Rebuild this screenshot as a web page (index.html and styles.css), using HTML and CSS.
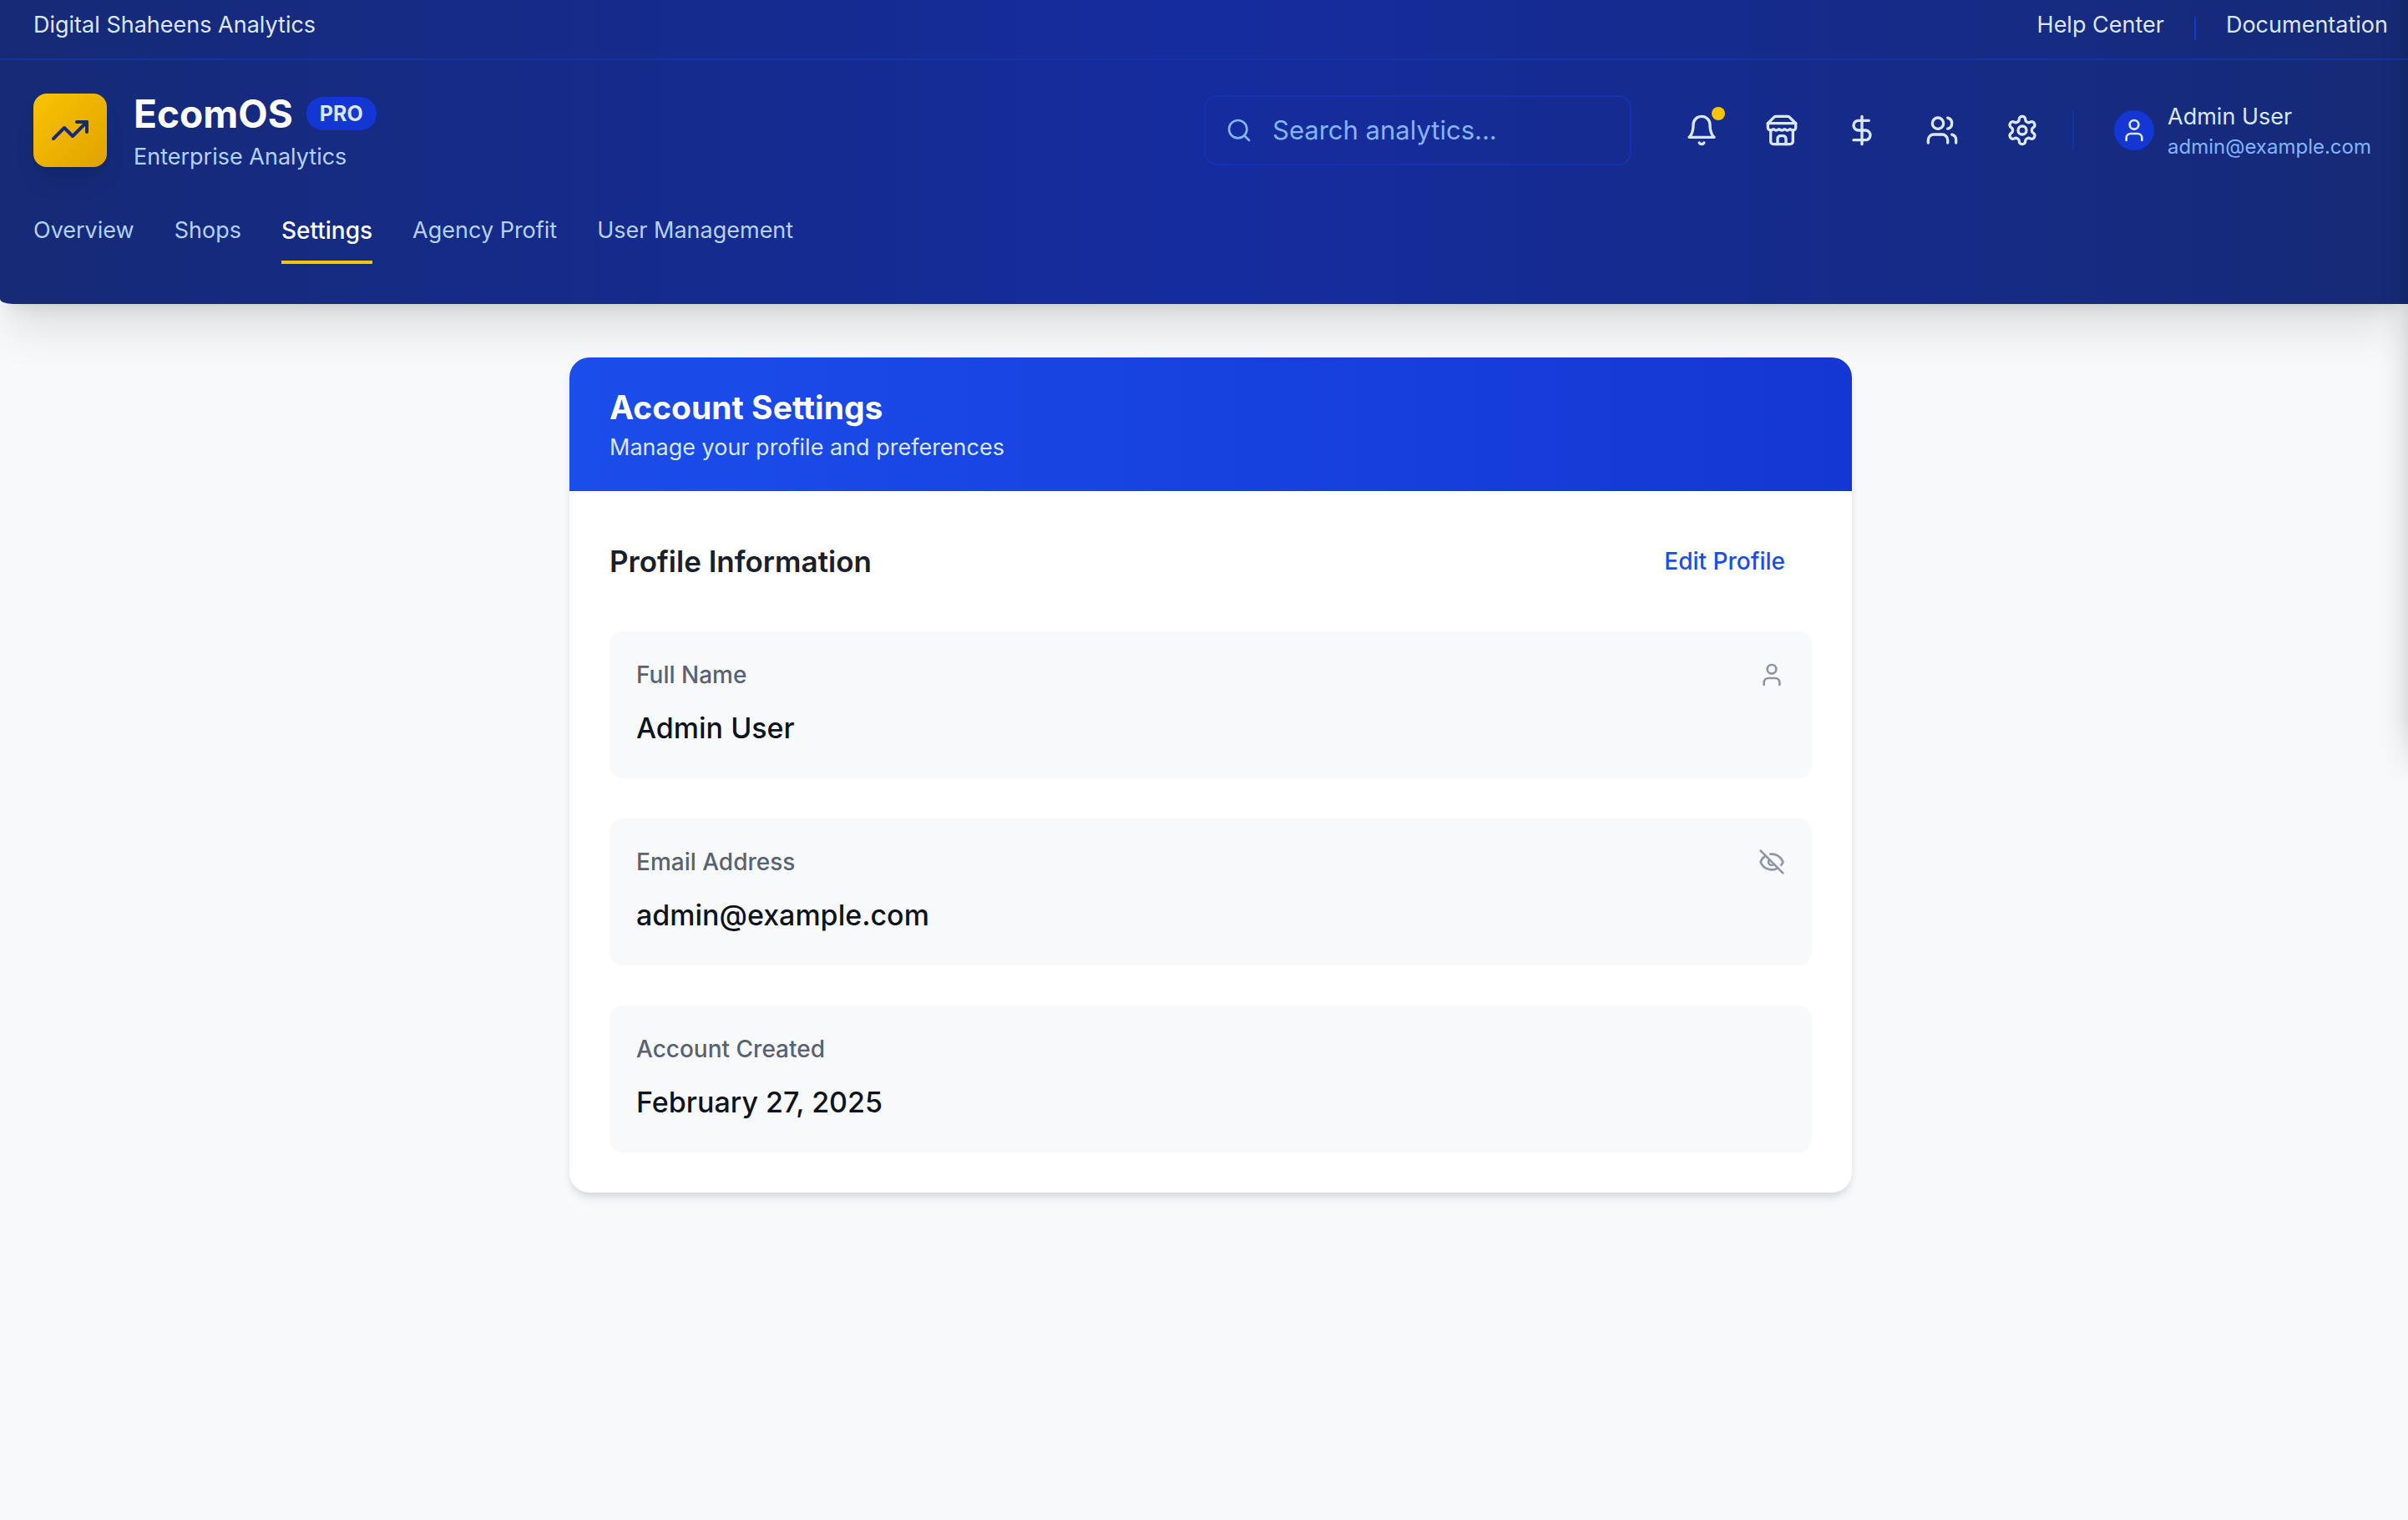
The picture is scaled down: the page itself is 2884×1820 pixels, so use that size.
FILE: index.html
```html
<!DOCTYPE html>
<html lang="en">
<head>
<meta charset="utf-8">
<meta name="viewport" content="width=device-width, initial-scale=1">
<title>EcomOS – Account Settings</title>
<link rel="stylesheet" href="styles.css">
</head>
<body>
<header class="header">
  <div class="topbar">
    <span>Digital Shaheens Analytics</span>
    <div class="topbar-links">
      <a href="#help">Help Center</a>
      <span class="topbar-divider"></span>
      <a href="#docs">Documentation</a>
    </div>
  </div>
  <div class="masthead">
    <div class="brand">
      <div class="brand-logo">
        <svg class="icon icon-lg" viewBox="0 0 24 24"><path d="M22 7 13.500 15.500 8.500 10.500 2 17"/><path d="M16 7h6v6"/></svg>
      </div>
      <div>
        <div class="brand-title"><span class="brand-name">EcomOS</span><span class="badge">PRO</span></div>
        <div class="brand-tagline">Enterprise Analytics</div>
      </div>
    </div>
    <div class="tools">
      <label class="search">
        <svg class="icon icon-sm" viewBox="0 0 24 24"><circle cx="11" cy="11" r="8"/><path d="m21 21-4.300-4.300"/></svg>
        <input class="search-input" type="search" placeholder="Search analytics..." aria-label="Search analytics">
      </label>
      <div class="actions">
        <button class="icon-button" aria-label="Notifications">
          <svg class="icon icon-md" viewBox="0 0 24 24"><path d="M6 8a6 6 0 0 1 12 0c0 7 3 9 3 9H3s3-2 3-9"/><path d="M10.300 21a1.940 1.940 0 0 0 3.400 0"/></svg>
          <span class="dot"></span>
        </button>
        <button class="icon-button" aria-label="Shops">
          <svg class="icon icon-md" viewBox="0 0 24 24"><path d="m2 7 4.410-4.410A2 2 0 0 1 7.830 2h8.340a2 2 0 0 1 1.420.59L22 7"/><path d="M4 12v8a2 2 0 0 0 2 2h12a2 2 0 0 0 2-2v-8"/><path d="M15 22v-4a2 2 0 0 0-2-2h-2a2 2 0 0 0-2 2v4"/><path d="M2 7h20"/><path d="M22 7v3a2 2 0 0 1-2 2a2.700 2.700 0 0 1-1.590-.63.700.700 0 0 0-.82 0A2.700 2.700 0 0 1 16 12a2.700 2.700 0 0 1-1.590-.63.700.700 0 0 0-.82 0A2.700 2.700 0 0 1 12 12a2.700 2.700 0 0 1-1.590-.63.700.700 0 0 0-.82 0A2.700 2.700 0 0 1 8 12a2.700 2.700 0 0 1-1.590-.63.700.700 0 0 0-.82 0A2.700 2.700 0 0 1 4 12a2 2 0 0 1-2-2V7"/></svg>
        </button>
        <button class="icon-button" aria-label="Profit">
          <svg class="icon icon-md" viewBox="0 0 24 24"><path d="M12 2v20"/><path d="M17 5H9.500a3.500 3.500 0 0 0 0 7h5a3.500 3.500 0 0 1 0 7H6"/></svg>
        </button>
        <button class="icon-button" aria-label="Users">
          <svg class="icon icon-md" viewBox="0 0 24 24"><path d="M16 21v-2a4 4 0 0 0-4-4H6a4 4 0 0 0-4 4v2"/><circle cx="9" cy="7" r="4"/><path d="M22 21v-2a4 4 0 0 0-3-3.870"/><path d="M16 3.130a4 4 0 0 1 0 7.750"/></svg>
        </button>
        <button class="icon-button" aria-label="Settings">
          <svg class="icon icon-md" viewBox="0 0 24 24"><path d="M12.220 2h-.44a2 2 0 0 0-2 2v.18a2 2 0 0 1-1 1.730l-.43.25a2 2 0 0 1-2 0l-.15-.08a2 2 0 0 0-2.730.73l-.22.38a2 2 0 0 0 .73 2.730l.15.1a2 2 0 0 1 1 1.720v.51a2 2 0 0 1-1 1.740l-.15.09a2 2 0 0 0-.73 2.730l.22.38a2 2 0 0 0 2.730.73l.15-.08a2 2 0 0 1 2 0l.43.25a2 2 0 0 1 1 1.730V20a2 2 0 0 0 2 2h.44a2 2 0 0 0 2-2v-.18a2 2 0 0 1 1-1.730l.43-.25a2 2 0 0 1 2 0l.15.08a2 2 0 0 0 2.730-.73l.22-.39a2 2 0 0 0-.73-2.730l-.15-.08a2 2 0 0 1-1-1.740v-.5a2 2 0 0 1 1-1.740l.15-.09a2 2 0 0 0 .73-2.730l-.22-.38a2 2 0 0 0-2.730-.73l-.15.08a2 2 0 0 1-2 0l-.43-.25a2 2 0 0 1-1-1.730V4a2 2 0 0 0-2-2z"/><circle cx="12" cy="12" r="3"/></svg>
        </button>
      </div>
      <span class="tools-divider"></span>
      <button class="account">
        <span class="avatar"><svg class="icon icon-sm" viewBox="0 0 24 24"><path d="M19 21v-2a4 4 0 0 0-4-4H9a4 4 0 0 0-4 4v2"/><circle cx="12" cy="7" r="4"/></svg></span>
        <span class="account-text">
          <span class="account-name">Admin User</span>
          <span class="account-email">admin@example.com</span>
        </span>
      </button>
    </div>
  </div>
  <nav class="nav">
    <a href="#overview">Overview</a>
    <a href="#shops">Shops</a>
    <a class="active" href="#settings" aria-current="page">Settings</a>
    <a href="#profit">Agency Profit</a>
    <a href="#users">User Management</a>
  </nav>
</header>

<main class="content">
  <section class="card">
    <div class="card-header">
      <h1>Account Settings</h1>
      <p>Manage your profile and preferences</p>
    </div>
    <div class="card-body">
      <div class="section-head">
        <h2>Profile Information</h2>
        <button class="edit-button">Edit Profile</button>
      </div>
      <dl class="fields">
        <div class="field">
          <dt>Full Name <svg class="icon icon-sm" viewBox="0 0 24 24"><path d="M19 21v-2a4 4 0 0 0-4-4H9a4 4 0 0 0-4 4v2"/><circle cx="12" cy="7" r="4"/></svg></dt>
          <dd>Admin User</dd>
        </div>
        <div class="field">
          <dt>Email Address <svg class="icon icon-sm" viewBox="0 0 24 24"><path d="M10.733 5.076a10.744 10.744 0 0 1 11.205 6.575 1 1 0 0 1 0 .696 10.747 10.747 0 0 1-1.444 2.490"/><path d="M14.084 14.158a3 3 0 0 1-4.242-4.242"/><path d="M17.479 17.499a10.750 10.750 0 0 1-15.417-5.151 1 1 0 0 1 0-.696 10.750 10.750 0 0 1 4.446-5.143"/><path d="m2 2 20 20"/></svg></dt>
          <dd>admin@example.com</dd>
        </div>
        <div class="field">
          <dt>Account Created</dt>
          <dd>February 27, 2025</dd>
        </div>
      </dl>
    </div>
  </section>
</main>
<div class="drawer-shadow" aria-hidden="true"></div>
</body>
</html>
```
FILE: styles.css
```css
* { box-sizing: border-box; margin: 0; padding: 0; }

body {
  position: relative;
  min-height: 100vh;
  background: #f8f9fb;
  color: #0d121d;
  font-family: Inter, "Liberation Sans", sans-serif;
  font-size: 27px;
  line-height: 40px;
}

a { color: inherit; text-decoration: none; }

button, input {
  font: inherit;
  color: inherit;
  background: none;
  border: 0;
  outline: 0;
}

button { cursor: pointer; }

.icon {
  display: block;
  flex: none;
  fill: none;
  stroke: currentColor;
  stroke-width: 2;
  stroke-linecap: round;
  stroke-linejoin: round;
}
.icon-sm { width: 32px; height: 32px; }
.icon-md { width: 40px; height: 40px; }
.icon-lg { width: 48px; height: 48px; }

.header {
  padding-bottom: 48px;
  border-bottom-left-radius: 16px 6px;
  background: linear-gradient(to right, #162a76, #152c9f, #162a76);
  color: #d8e6fe;
  box-shadow: 0 40px 50px -10px rgba(0, 0, 0, .1), 0 16px 20px -12px rgba(0, 0, 0, .1);
}

.topbar {
  display: flex;
  justify-content: space-between;
  padding: 10px 24px 20px 40px;
  border-bottom: 2px solid #1532ad;
}
.topbar-links { display: flex; gap: 36px; }
.topbar-divider { width: 2px; height: 28px; margin-top: 10px; background: #1437d3; }

.masthead {
  display: flex;
  justify-content: space-between;
  align-items: center;
  padding: 32px 24px 32px 40px;
}

.brand { display: flex; align-items: center; gap: 32px; }
.brand-logo {
  display: grid;
  place-items: center;
  width: 88px;
  height: 88px;
  border-radius: 16px;
  background: linear-gradient(to bottom right, #f9c400, #e1a200);
  color: #162a76;
  box-shadow: 0 20px 30px -6px rgba(0, 0, 0, .1), 0 8px 12px -8px rgba(0, 0, 0, .1);
}
.brand-title { display: flex; align-items: center; gap: 16px; }
.brand-name { font-size: 46px; line-height: 64px; font-weight: 700; color: #fff; }
.badge {
  padding: 4px 16px;
  border-radius: 20px;
  background: #1437d3;
  font-size: 25px;
  line-height: 32px;
  font-weight: 700;
}
.brand-tagline { color: #b4d1fe; }

.tools { display: flex; align-items: center; }
.search {
  display: flex;
  align-items: center;
  gap: 24px;
  width: 512px;
  height: 84px;
  margin-right: 44px;
  padding: 0 24px;
  border: 2px solid #1532b2;
  border-radius: 16px;
  color: #84b4fe;
}
.search-input { flex: 1; min-width: 0; font-size: 31px; line-height: 48px; }
.search-input::placeholder { color: inherit; opacity: 1; }

.actions { display: flex; gap: 16px; }
.icon-button {
  position: relative;
  display: grid;
  place-items: center;
  width: 80px;
  height: 80px;
}
.dot {
  position: absolute;
  top: 12px;
  right: 12px;
  width: 16px;
  height: 16px;
  border-radius: 50%;
  background: #f9c400;
}
.tools-divider { width: 2px; height: 48px; margin: 0 24px 0 20px; background: #1532a0; }

.account {
  display: flex;
  align-items: center;
  gap: 16px;
  padding: 0 20px 0 24px;
  text-align: left;
}
.avatar {
  display: grid;
  place-items: center;
  width: 48px;
  height: 48px;
  border-radius: 50%;
  background: #1437d3;
}
.account-text { display: grid; }
.account-email { font-size: 24px; line-height: 32px; color: #84b4fe; }

.nav { display: flex; gap: 48px; padding: 0 40px; color: #b4d1fe; }
.nav a { padding: 16px 0; border-bottom: 4px solid transparent; }
.nav .active { border-color: #f9c400; color: #fff; font-size: 28px; font-weight: 500; }

.content { padding: 64px 32px 64px 48px; }

.card {
  max-width: 1536px;
  margin: 0 auto;
  overflow: hidden;
  border-radius: 24px;
  background: #fff;
  box-shadow: 0 8px 12px -2px rgba(0, 0, 0, .1), 0 4px 8px -4px rgba(0, 0, 0, .1);
}
.card-header {
  padding: 32px 48px;
  background: linear-gradient(to right, #1b4deb, #1437d3);
  color: #d8e6fe;
}
.card-header h1 { font-size: 39px; line-height: 56px; font-weight: 700; color: #fff; }
.card-body { display: grid; gap: 48px; padding: 48px; }

.section-head { display: flex; justify-content: space-between; align-items: center; }
.section-head h2 { font-size: 35px; line-height: 56px; font-weight: 600; color: #18202c; }
.edit-button { padding: 16px 32px; font-size: 28px; font-weight: 500; color: #1b4deb; }

.fields { display: grid; gap: 48px; }
.field {
  display: grid;
  gap: 16px;
  padding: 32px;
  border-radius: 16px;
  background: #f8f9fb;
}
.field dt {
  display: flex;
  justify-content: space-between;
  align-items: center;
  font-size: 28px;
  font-weight: 500;
  color: #596273;
}
.field dt .icon { color: #8e96a4; }
.field dd { font-size: 34px; line-height: 56px; font-weight: 500; }

.drawer-shadow {
  position: absolute;
  top: 0;
  right: 0;
  width: 34px;
  height: 940px;
  background: linear-gradient(to left, rgba(0, 0, 0, .1), rgba(0, 0, 0, .05) 30%, rgba(0, 0, 0, .02) 65%, transparent);
  mask-image: linear-gradient(to top, transparent, #000 80px);
  pointer-events: none;
}
```
